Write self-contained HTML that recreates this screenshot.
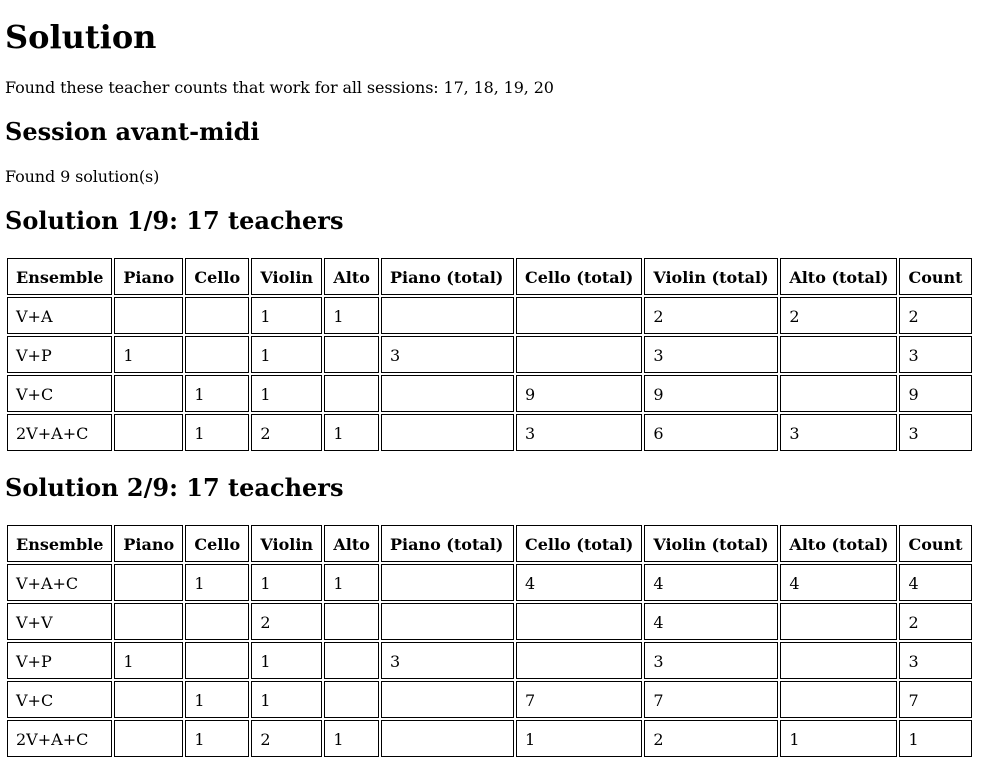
<!DOCTYPE html>
<html><head><meta charset="utf-8"><style>
body{margin:5px;font-family:"DejaVu Serif",serif;font-size:16px;color:#000;background:#fff}
h1{font-size:32px;margin:18px 0 22px}
h2{font-size:24px;margin:20px 0 21px}
p{margin:16px 0;letter-spacing:-0.12px}
table{border-spacing:2px;margin-left:0}
td,th{border:1px solid #000;padding:8px 8px 7px;text-align:left;box-sizing:border-box;height:37px;white-space:nowrap}
th{font-weight:bold}
</style></head><body>
<h1>Solution</h1>
<p>Found these teacher counts that work for all sessions: 17, 18, 19, 20</p>
<h2>Session avant-midi</h2>
<p>Found 9 solution(s)</p>
<h2>Solution 1/9: 17 teachers</h2>
<table>
<tr><th style="width:104px">Ensemble</th><th style="width:69px">Piano</th><th style="width:64px">Cello</th><th style="width:71px">Violin</th><th style="width:53px">Alto</th><th style="width:133px">Piano (total)</th><th style="width:126px">Cello (total)</th><th style="width:134px">Violin (total)</th><th style="width:117px">Alto (total)</th><th style="width:73px">Count</th></tr>
<tr><td>V+A</td><td></td><td></td><td>1</td><td>1</td><td></td><td></td><td>2</td><td>2</td><td>2</td></tr>
<tr><td>V+P</td><td>1</td><td></td><td>1</td><td></td><td>3</td><td></td><td>3</td><td></td><td>3</td></tr>
<tr><td>V+C</td><td></td><td>1</td><td>1</td><td></td><td></td><td>9</td><td>9</td><td></td><td>9</td></tr>
<tr><td>2V+A+C</td><td></td><td>1</td><td>2</td><td>1</td><td></td><td>3</td><td>6</td><td>3</td><td>3</td></tr>
</table>
<h2>Solution 2/9: 17 teachers</h2>
<table>
<tr><th style="width:104px">Ensemble</th><th style="width:69px">Piano</th><th style="width:64px">Cello</th><th style="width:71px">Violin</th><th style="width:53px">Alto</th><th style="width:133px">Piano (total)</th><th style="width:126px">Cello (total)</th><th style="width:134px">Violin (total)</th><th style="width:117px">Alto (total)</th><th style="width:73px">Count</th></tr>
<tr><td>V+A+C</td><td></td><td>1</td><td>1</td><td>1</td><td></td><td>4</td><td>4</td><td>4</td><td>4</td></tr>
<tr><td>V+V</td><td></td><td></td><td>2</td><td></td><td></td><td></td><td>4</td><td></td><td>2</td></tr>
<tr><td>V+P</td><td>1</td><td></td><td>1</td><td></td><td>3</td><td></td><td>3</td><td></td><td>3</td></tr>
<tr><td>V+C</td><td></td><td>1</td><td>1</td><td></td><td></td><td>7</td><td>7</td><td></td><td>7</td></tr>
<tr><td>2V+A+C</td><td></td><td>1</td><td>2</td><td>1</td><td></td><td>1</td><td>2</td><td>1</td><td>1</td></tr>
</table>
</body></html>
